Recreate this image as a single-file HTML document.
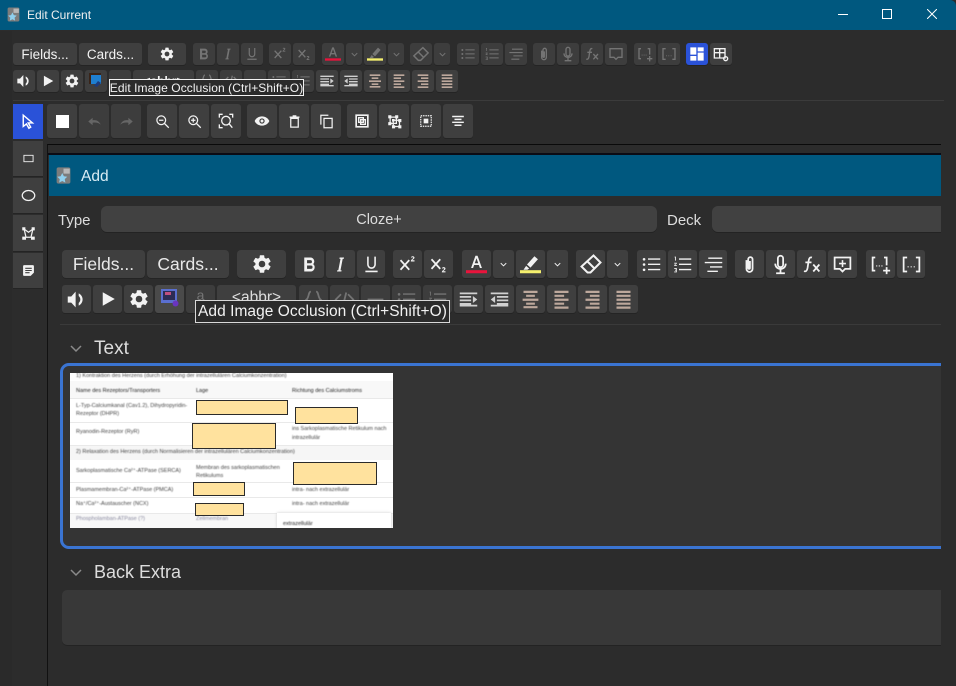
<!DOCTYPE html>
<html><head><meta charset="utf-8"><title>Edit Current</title>
<style>
html,body{margin:0;padding:0;width:956px;height:686px;overflow:hidden;background:#2c2c2c;font-family:"Liberation Sans",sans-serif;color:#eee}
div,span{box-sizing:border-box}
.a{position:absolute}
.row{position:absolute;left:0;width:956px}
.b{position:absolute;top:0;height:100%;background:#3f3f3f;display:flex;align-items:center;justify-content:center;border-radius:3px;box-shadow:0 1px 0 #242424;color:#f2f2f2;white-space:nowrap}
.r1,.r2{height:22px}.r1 svg,.r2 svg{width:16px;height:16px}
.r1{top:43px}.r2{top:70px}
.t{top:104px;height:34px}.t svg{width:15px;height:15px}
.r3,.r4{height:28px}.r3 svg,.r4 svg{width:21px;height:21px}
.r3{top:250px}.r4{top:285px}
.d{color:#747474;background:#3d3d3d}
.w{color:#bda89c}
.g{color:#d0d0d0}
.ch svg{width:11px!important;height:11px!important}
svg{display:block;fill:currentColor}
.s{fill:none;stroke:currentColor;stroke-width:2}
.tt{position:absolute;background:#2b2b2b;border:1px solid #f2f2f2;color:#f2f2f2;white-space:nowrap;display:flex;align-items:center;justify-content:center}
.ov{position:absolute;background:#ffe29e;border:1px solid #2b2b2b}
.p{position:absolute;font-size:5.5px;color:#444;white-space:nowrap;line-height:6px;filter:blur(.5px)}
.l{position:absolute;left:0;width:323px;height:1px;background:#e9e9e9}
</style></head><body>
<svg width="0" height="0" style="position:absolute"><defs>
<symbol id="gear" viewBox="0 0 24 24"><path d="M19.14 12.94c.04-.3.06-.61.06-.94 0-.32-.02-.64-.07-.94l2.03-1.58a.49.49 0 0 0 .12-.61l-1.92-3.32a.49.49 0 0 0-.59-.22l-2.39.96c-.5-.38-1.03-.7-1.62-.94l-.36-2.54a.48.48 0 0 0-.48-.41h-3.84a.48.48 0 0 0-.47.41l-.36 2.54c-.59.24-1.13.57-1.62.94l-2.39-.96a.49.49 0 0 0-.59.22L2.74 8.87a.48.48 0 0 0 .12.61l2.03 1.58c-.05.3-.09.63-.09.94s.02.64.07.94l-2.03 1.58a.49.49 0 0 0-.12.61l1.92 3.32c.12.22.37.29.59.22l2.39-.96c.5.38 1.03.7 1.62.94l.36 2.54c.05.24.24.41.48.41h3.84c.24 0 .44-.17.47-.41l.36-2.54c.59-.24 1.13-.56 1.62-.94l2.39.96c.22.08.47 0 .59-.22l1.92-3.32c.12-.22.07-.47-.12-.61l-2.01-1.58zM12 15.6A3.6 3.6 0 1 1 12 8.4a3.6 3.6 0 0 1 0 7.2z"/></symbol>
<symbol id="bold" viewBox="0 0 24 24"><path d="M6 4h7a4.500 4.500 0 0 1 3.200 7.600A4.800 4.800 0 0 1 14 20H6zm3.200 3v3.600H13a1.800 1.800 0 0 0 0-3.600zm0 6.200V17h4.400a1.900 1.900 0 0 0 0-3.800z"/></symbol>
<symbol id="ital" viewBox="0 0 24 24"><path d="M11 4h5l-.3 1.500h-1.200L12 18.500h1.200L13 20H8l.3-1.500h1.200L12 5.500h-1.200z"/></symbol>
<symbol id="und" viewBox="0 0 24 24"><path d="M7 3h1.800v9a3.200 3.200 0 0 0 6.400 0V3H17v9a5 5 0 0 1-10 0zM5 19h14v1.800H5z"/></symbol>
<symbol id="sup" viewBox="0 0 24 24"><path class="s" d="M4 7l10 11M14 7L4 18"/><path d="M16 3.500c1-1.500 4-1.200 4 .7 0 1.300-1.900 2-2.500 3H20V8.500h-4.200c0-2.300 2.700-3 2.700-4.200 0-.8-1.200-.7-1.700 0z"/></symbol>
<symbol id="sub" viewBox="0 0 24 24"><path class="s" d="M4 6l10 11M14 6L4 17"/><path d="M16 16c1-1.500 4-1.200 4 .7 0 1.300-1.900 2-2.500 3H20V21h-4.200c0-2.300 2.700-3 2.700-4.200 0-.8-1.200-.7-1.700 0z"/></symbol>
<symbol id="A" viewBox="0 0 24 24"><path d="M10.800 2h2.400l5 14h-2.300l-1.200-3.500H9.300L8.100 16H5.800zm-.8 8.500h4L12 4.800z"/><rect x="0" y="18.500" width="24" height="3.500" fill="#e8143c"/></symbol>
<symbol id="pen" viewBox="0 0 24 24"><path d="M16.500 2.500l4 3.500-8.500 9.500-4-3.500zM7 13.500l3.500 3-2 1.500H4z"/><rect x="0" y="18.500" width="24" height="3.500" fill="#f5f06e"/></symbol>
<symbol id="chev" viewBox="0 0 24 24"><path class="s" stroke-width="3" d="M6 9l6 6 6-6"/></symbol>
<symbol id="eras" viewBox="0 0 24 24"><path class="s" stroke-width="1.600" d="M14.500 3.500l7 7-10 10h-3l-6-6zM8.500 9.500l7 7"/></symbol>
<symbol id="ul" viewBox="0 0 24 24"><path d="M8 5h14v1.600H8zM8 11h14v1.600H8zM8 17h14v1.600H8z"/><circle cx="3.500" cy="6" r="1.500"/><circle cx="3.500" cy="12" r="1.500"/><circle cx="3.500" cy="18" r="1.500"/></symbol>
<symbol id="ol" viewBox="0 0 24 24"><path d="M8 5h14v1.600H8zM8 11h14v1.600H8zM8 17h14v1.600H8zM3 3h1.500v4.500h-1V4H3zM2.500 10h3v1l-2 1.500h2v1h-3v-1l2-1.500h-2zM2.500 16h3v5h-3v-1h2v-1h-1v-1h1v-1h-2z"/></symbol>
<symbol id="al" viewBox="0 0 24 24"><path d="M6 4h16v1.600H6zM2 9h20v1.600H2zM8 14h14v1.600H8zM5 19h12v1.600H5z"/></symbol>
<symbol id="clip" viewBox="0 0 24 24"><path class="s" stroke-width="1.500" d="M8.500 7v10a3.500 3.500 0 0 0 7 0V6a2.500 2.500 0 0 0-5 0v10a1 1 0 0 0 2 0V8"/></symbol>
<symbol id="mic" viewBox="0 0 24 24"><path class="s" stroke-width="1.500" d="M12 2a3 3 0 0 1 3 3v7a3 3 0 0 1-6 0V5a3 3 0 0 1 3-3zM6 11c0 8 12 8 12 0M12 17v4M7 22h10"/></symbol>
<symbol id="fx" viewBox="0 0 24 24"><path class="s" stroke-width="1.600" d="M12.500 4C9.500 3 9 6 8.500 9L7.500 16C7 19 5.500 20.500 3.500 19.500M5 9.500h7"/><path class="s" stroke-width="2" d="M14 12l7 8M21 12l-7 8"/></symbol>
<symbol id="cm" viewBox="0 0 24 24"><path class="s" stroke-width="1.700" d="M3 4h18v13h-6l-3 3-3-3H3z"/><path d="M11.100 7h1.800v3h3v1.800h-3v3h-1.800v-3h-3V10h3z"/></symbol>
<symbol id="cm0" viewBox="0 0 24 24"><path class="s" stroke-width="1.700" d="M3 4h18v13h-6l-3 3-3-3H3z"/></symbol>
<symbol id="cl1" viewBox="0 0 24 24"><path class="s" stroke-width="1.700" d="M6 4H3v15h3M16 4h3v9"/><path d="M7 13h1.300v1.300H7zM10 13h1.300v1.300H10zM13 13h1.300v1.300H13zM18 15h2v3h3v2h-3v3h-2v-3h-3v-2h3z"/></symbol>
<symbol id="cl2" viewBox="0 0 24 24"><path class="s" stroke-width="1.700" d="M7 4H3v16h4M17 4h4v16h-4"/><path d="M7.500 14h1.300v1.300H7.500zM11 14h1.300v1.300H11zM14.500 14h1.300v1.300h-1.300z"/></symbol>
<symbol id="spk" viewBox="0 0 24 24"><path d="M2 8.500h4L11 3v18l-5-5.500H2zM14.500 5c6 3 6 11 0 14v-3c2.500-2 2.500-6 0-8z"/></symbol>
<symbol id="play" viewBox="0 0 24 24"><path d="M5 3l16 9-16 9z"/></symbol>
<symbol id="lay" viewBox="0 0 24 24"><path d="M2 2h9v11H2zM13 2h9v6h-9zM13 10h9v12h-9zM2 15h9v7H2z"/></symbol>
<symbol id="tbl" viewBox="0 0 24 24"><path class="s" stroke-width="2" d="M2 4h16v14H2zM2 10h16M10 4v14"/><circle class="s" cx="19" cy="19" r="3" stroke-width="1.500" fill="#404040"/></symbol>
<symbol id="ind" viewBox="0 0 24 24"><path d="M2 4h20v2H2zM2 8h13v2H2zM2 12h13v2H2zM2 16h13v2H2zM2 20h20v-2H2zM17 8l5 4-5 4z"/></symbol>
<symbol id="out" viewBox="0 0 24 24"><path d="M2 4h20v2H2zM9 8h13v2H9zM9 12h13v2H9zM9 16h13v2H9zM2 20h20v-2H2zM7 8l-5 4 5 4z"/></symbol>
<symbol id="ac" viewBox="0 0 24 24"><path d="M4 3h16v2.500H4zM7 7.500h10V10H7zM3 12h18v2.500H3zM7 16.500h10V19H7zM4 20.500h16V23H4z" transform="translate(0 -1)"/></symbol>
<symbol id="aL" viewBox="0 0 24 24"><path d="M4 2h16v2.500H4zM4 6.500h11V9H4zM4 11h16v2.500H4zM4 15.500h11V18H4zM4 20h16v2.500H4z"/></symbol>
<symbol id="aR" viewBox="0 0 24 24"><path d="M4 2h16v2.500H4zM9 6.500h11V9H9zM4 11h16v2.500H4zM9 15.500h11V18H9zM4 20h16v2.500H4z"/></symbol>
<symbol id="aJ" viewBox="0 0 24 24"><path d="M4 2h16v2.500H4zM4 6.500h16V9H4zM4 11h16v2.500H4zM4 15.500h16V18H4zM4 20h16v2.500H4z"/></symbol>
<symbol id="cur" viewBox="0 0 24 24"><path class="s" d="M6 3l13 11h-6l3.500 6-2.500 1.500-3.500-6L6 19z" fill="#2a52d8"/></symbol>
<symbol id="rect" viewBox="0 0 24 24"><path class="s" stroke-width="2.500" d="M2 5h20v14H2z"/></symbol>
<symbol id="ell" viewBox="0 0 24 24"><ellipse class="s" cx="12" cy="12" rx="10" ry="8"/></symbol>
<symbol id="poly" viewBox="0 0 24 24"><path class="s" d="M5 5l3 13h8l3-13-7 5z"/><path d="M2 2h5v5H2zM17 2h5v5h-5zM2 17h6v5H2zM16 17h6v5h-6z"/></symbol>
<symbol id="note" viewBox="0 0 24 24"><path d="M4 2h16a2 2 0 0 1 2 2v12l-6 6H4a2 2 0 0 1-2-2V4a2 2 0 0 1 2-2zm2 5v2h12V7zm0 4v2h12v-2zm0 4v2h8v-2z" fill-rule="evenodd"/></symbol>
<symbol id="undo" viewBox="0 0 24 24"><path d="M9 6v4c6-1 10 1 13 7-4-3-8-4-13-3v4L2 12z"/></symbol>
<symbol id="redo" viewBox="0 0 24 24"><path d="M15 6v4c-6-1-10 1-13 7 4-3 8-4 13-3v4l7-6z"/></symbol>
<symbol id="zo" viewBox="0 0 24 24"><circle class="s" cx="10" cy="10" r="7"/><path class="s" d="M15 15l7 7M6.500 10h7"/></symbol>
<symbol id="zi" viewBox="0 0 24 24"><circle class="s" cx="10" cy="10" r="7"/><path class="s" d="M15 15l7 7M6.500 10h7M10 6.500v7"/></symbol>
<symbol id="zf" viewBox="0 0 24 24"><circle class="s" cx="12" cy="11.500" r="6.500"/><path class="s" d="M16.500 16l5 6M2 7V2h5M17 2h5v5M2 17v5h5"/></symbol>
<symbol id="eye" viewBox="0 0 24 24"><path d="M12 5c5 0 9.500 3 11 7-1.500 4-6 7-11 7S2.500 16 1 12c1.500-4 6-7 11-7zm0 3a4 4 0 1 0 0 8 4 4 0 0 0 0-8zm0 1.800a2.200 2.200 0 1 1 0 4.400 2.200 2.200 0 0 1 0-4.400z" fill-rule="evenodd"/></symbol>
<symbol id="trash" viewBox="0 0 24 24"><path class="s" d="M6 7h12v14H6zM4 5h16"/><path d="M9 2h6v2H9z"/></symbol>
<symbol id="copy" viewBox="0 0 24 24"><path class="s" d="M8 7h13v15H8zM3 17V2h12"/></symbol>
<symbol id="grp" viewBox="0 0 24 24"><path class="s" d="M7 7h7v7H7zM10 10h7v7h-7z"/><path d="M2 2h20v20H2zm2.500 2.500v15h15v-15z" fill-rule="evenodd"/></symbol>
<symbol id="ung" viewBox="0 0 24 24"><path class="s" d="M5 5h10v10H5zM10 10h10v10H10z"/><path d="M2 2h5v5H2zM13 2h5v5h-5zM2 13h5v5H2zM8 8h4v4H8zM18 8h5v5h-5zM8 18h5v5H8zM18 18h5v5h-5z"/></symbol>
<symbol id="sel" viewBox="0 0 24 24"><path class="s" stroke-dasharray="2.500 1.500" d="M3 3h18v18H3z"/><path d="M8 8h8v8H8z"/></symbol>
<symbol id="alc" viewBox="0 0 24 24"><path d="M2 3h20v2.500H2zM6 8h12v2.500H6zM2 13h20v2.500H2zM6 18h12v2.500H6z"/></symbol>
<symbol id="dash" viewBox="0 0 24 24"><path d="M3 11h18v2.500H3z"/></symbol>
<symbol id="code" viewBox="0 0 24 24"><path class="s" d="M8 6l-6 6 6 6M16 6l6 6-6 6M14 4l-4 16"/></symbol>
<symbol id="brace" viewBox="0 0 24 24"><path class="s" d="M9 3C6 3 7 10 4 12c3 2 2 9 5 9M15 3c3 0 2 7 5 9-3 2-2 9-5 9"/></symbol>
<symbol id="anki" viewBox="0 0 12 14"><rect x=".5" y=".5" width="11" height="13" rx="1.500" fill="#7c7c7c"/><rect x="6" y="1.500" width="5" height="4" fill="#b8b8b8"/><path d="M5 5l1.300 2.600 2.700.4-2 1.900.5 2.800L5 11.400l-2.500 1.300.5-2.800-2-1.900 2.700-.4z" fill="#8fd0ee"/></symbol>
</defs></svg>

<!-- Title bar -->
<div class="a" style="left:0;top:0;width:956px;height:30px;background:#00587f;border-radius:0 6px 0 0"></div>
<svg class="a" style="left:7px;top:7px;width:13px;height:15px"><use href="#anki"/></svg>
<div class="a" style="left:27px;top:8px;font-size:12px;line-height:15px;color:#f0f0f0">Edit Current</div>
<div class="a" style="left:838px;top:14px;width:10px;height:1px;background:#fff"></div>
<div class="a" style="left:882px;top:9px;width:10px;height:10px;border:1px solid #fff"></div>
<svg class="a" style="left:927px;top:9px;width:10px;height:10px"><path d="M0 0L10 10M10 0L0 10" stroke="#fff" fill="none"/></svg>

<!-- Top row 1 -->
<div class="row r1">
<div class="b" style="left:13px;width:64px;font-size:13.500px">Fields...</div>
<div class="b" style="left:79px;width:63px;font-size:13.500px">Cards...</div>
<div class="b" style="left:148px;width:38px"><svg><use href="#gear"/></svg></div>
<div class="b d" style="left:193px;width:22px"><svg><use href="#bold"/></svg></div>
<div class="b d" style="left:217px;width:22px"><svg><use href="#ital"/></svg></div>
<div class="b d" style="left:241px;width:22px"><svg><use href="#und"/></svg></div>
<div class="b d" style="left:269px;width:22px"><svg><use href="#sup"/></svg></div>
<div class="b d" style="left:293px;width:22px"><svg><use href="#sub"/></svg></div>
<div class="b d" style="left:322px;width:22px"><svg><use href="#A"/></svg></div>
<div class="b d ch" style="left:346px;width:16px"><svg><use href="#chev"/></svg></div>
<div class="b d" style="left:364px;width:22px"><svg><use href="#pen"/></svg></div>
<div class="b d ch" style="left:388px;width:16px"><svg><use href="#chev"/></svg></div>
<div class="b d" style="left:410px;width:22px"><svg style="width:18px;height:18px"><use href="#eras"/></svg></div>
<div class="b d ch" style="left:434px;width:16px"><svg><use href="#chev"/></svg></div>
<div class="b d" style="left:457px;width:22px"><svg><use href="#ul"/></svg></div>
<div class="b d" style="left:481px;width:22px"><svg><use href="#ol"/></svg></div>
<div class="b d" style="left:505px;width:22px"><svg><use href="#al"/></svg></div>
<div class="b d" style="left:533px;width:22px"><svg><use href="#clip"/></svg></div>
<div class="b d" style="left:557px;width:22px"><svg><use href="#mic"/></svg></div>
<div class="b d" style="left:581px;width:22px"><svg><use href="#fx"/></svg></div>
<div class="b d" style="left:605px;width:22px"><svg><use href="#cm0"/></svg></div>
<div class="b d" style="left:634px;width:22px"><svg><use href="#cl1"/></svg></div>
<div class="b d" style="left:658px;width:22px"><svg><use href="#cl2"/></svg></div>
<div class="b" style="left:686px;width:22px;background:#2a52d8;color:#fff"><svg><use href="#lay"/></svg></div>
<div class="b" style="left:710px;width:22px"><svg><use href="#tbl"/></svg></div>
</div>
<!-- Top row 2 -->
<div class="row r2">
<div class="b" style="left:13px;width:22px"><svg><use href="#spk"/></svg></div>
<div class="b" style="left:37px;width:22px"><svg style="width:14px;height:14px"><use href="#play"/></svg></div>
<div class="b" style="left:61px;width:22px"><svg><use href="#gear"/></svg></div>
<div class="b" style="left:85px;width:22px"><svg style="width:14px;height:14px;margin:-3px 0 0 -1px" viewBox="0 0 14 14"><rect width="12" height="11" fill="#3a2418"/><rect x="2" y="2" width="10" height="9" fill="#1f7fd0"/><path d="M5 13l4-5 3 2-4 4z" fill="#1d3a7a"/></svg></div>
<div class="b d" style="left:109px;width:22px"></div>
<div class="b" style="left:133px;width:61px;font-size:12px;align-items:flex-start;padding-top:4px;font-weight:bold">&lt;abbr&gt;</div>
<div class="b d" style="left:196px;width:22px"><svg><use href="#brace"/></svg></div>
<div class="b d" style="left:220px;width:22px"><svg><use href="#code"/></svg></div>
<div class="b d" style="left:244px;width:22px"><svg><use href="#dash"/></svg></div>
<div class="b d" style="left:268px;width:22px"><svg><use href="#ul"/></svg></div>
<div class="b d" style="left:292px;width:22px"><svg><use href="#ol"/></svg></div>
<div class="b g" style="left:316px;width:22px"><svg><use href="#ind"/></svg></div>
<div class="b g" style="left:340px;width:22px"><svg><use href="#out"/></svg></div>
<div class="b w" style="left:364px;width:22px"><svg><use href="#ac"/></svg></div>
<div class="b w" style="left:388px;width:22px"><svg><use href="#aL"/></svg></div>
<div class="b w" style="left:412px;width:22px"><svg><use href="#aR"/></svg></div>
<div class="b w" style="left:436px;width:22px"><svg><use href="#aJ"/></svg></div>
</div>
<div class="tt" style="left:109px;top:79px;width:195px;height:17px;font-size:12px;letter-spacing:.08px">Edit Image Occlusion (Ctrl+Shift+O)</div>
<div class="a" style="left:13px;top:100px;width:931px;height:1px;background:#3b3b3b"></div>

<!-- Tools -->
<div class="a" style="left:13px;top:104px;width:30px;height:35px;background:#2a52d8"><svg class="a" style="left:6px;top:9px;width:17px;height:17px;color:#fff"><use href="#cur"/></svg></div>
<div class="row t">
<div class="b" style="left:47px;width:30px"><svg viewBox="0 0 24 24" style="width:13px;height:13px"><path d="M0 0h24v24H0z" fill="#fff"/></svg></div>
<div class="b d" style="left:79px;width:30px;color:#666"><svg><use href="#undo"/></svg></div>
<div class="b d" style="left:111px;width:30px;color:#666"><svg><use href="#redo"/></svg></div>
<div class="b" style="left:147px;width:30px"><svg><use href="#zo"/></svg></div>
<div class="b" style="left:179px;width:30px"><svg><use href="#zi"/></svg></div>
<div class="b" style="left:211px;width:30px"><svg style="width:16px;height:16px"><use href="#zf"/></svg></div>
<div class="b" style="left:247px;width:30px"><svg style="width:16px;height:16px"><use href="#eye"/></svg></div>
<div class="b" style="left:279px;width:30px"><svg><use href="#trash"/></svg></div>
<div class="b" style="left:311px;width:30px"><svg><use href="#copy"/></svg></div>
<div class="b" style="left:347px;width:30px"><svg style="width:16px;height:16px"><use href="#grp"/></svg></div>
<div class="b" style="left:379px;width:30px"><svg style="width:15px;height:15px"><use href="#ung"/></svg></div>
<div class="b" style="left:411px;width:30px"><svg style="width:14px;height:14px"><use href="#sel"/></svg></div>
<div class="b" style="left:443px;width:30px"><svg style="width:14px;height:14px"><use href="#alc"/></svg></div>
</div>
<!-- Side rail -->
<div class="a" style="left:0;top:31px;width:12px;height:655px;background:#2a2a2a"></div>
<div class="b" style="left:13px;top:141px;width:30px;height:35px;border-radius:0"><svg style="width:11px;height:11px"><use href="#rect"/></svg></div>
<div class="b" style="left:13px;top:178px;width:30px;height:35px;border-radius:0"><svg style="width:15px;height:15px"><use href="#ell"/></svg></div>
<div class="b" style="left:13px;top:215px;width:30px;height:36px;border-radius:0"><svg style="width:15px;height:15px"><use href="#poly"/></svg></div>
<div class="b" style="left:13px;top:253px;width:30px;height:35px;border-radius:0"><svg style="width:13px;height:13px"><use href="#note"/></svg></div>

<!-- Canvas frame -->
<div class="a" style="left:47px;top:144px;width:895px;height:542px;border-left:1px solid #111;border-top:1px solid #0a0a0a;background:#2c2c2c"></div>
<div class="a" style="left:48px;top:153px;width:893px;height:2px;background:#0b0b14"></div>
<div class="a" style="left:49px;top:155px;width:892px;height:41px;background:#00587f"></div>
<svg class="a" style="left:56px;top:166px;width:15px;height:19px"><use href="#anki"/></svg>
<div class="a" style="left:81px;top:168px;font-size:15.500px;line-height:18px;color:#d8ecf4">Add</div>

<div class="a" style="left:58px;top:212px;font-size:15px;line-height:18px;color:#ddd">Type</div>
<div class="a" style="left:101px;top:206px;width:556px;height:26px;background:#414141;border-radius:6px;text-align:center;font-size:14.500px;line-height:29px;color:#ddd;box-shadow:0 1px 0 #232323">Cloze+</div>
<div class="a" style="left:667px;top:212px;font-size:15px;line-height:18px;color:#ddd">Deck</div>
<div class="a" style="left:712px;top:206px;width:229px;height:26px;background:#414141;border-radius:6px 0 0 6px;box-shadow:0 1px 0 #232323"></div>

<!-- Inner row 1 -->
<div class="row r3">
<div class="b" style="left:62px;width:83px;font-size:17.500px;color:#e8e8e8;border-radius:4px">Fields...</div>
<div class="b" style="left:147px;width:82px;font-size:17.500px;color:#e8e8e8;border-radius:4px">Cards...</div>
<div class="b" style="left:237px;width:49px;border-radius:4px"><svg style="width:22px;height:22px"><use href="#gear"/></svg></div>
<div class="b" style="left:295px;width:29px"><svg><use href="#bold"/></svg></div>
<div class="b" style="left:326px;width:29px"><svg><use href="#ital"/></svg></div>
<div class="b" style="left:357px;width:28px"><svg><use href="#und"/></svg></div>
<div class="b" style="left:393px;width:29px"><svg><use href="#sup"/></svg></div>
<div class="b" style="left:424px;width:29px"><svg><use href="#sub"/></svg></div>
<div class="b" style="left:462px;width:29px"><svg><use href="#A"/></svg></div>
<div class="b ch" style="left:493px;width:21px"><svg><use href="#chev"/></svg></div>
<div class="b" style="left:516px;width:29px"><svg><use href="#pen"/></svg></div>
<div class="b ch" style="left:547px;width:21px"><svg><use href="#chev"/></svg></div>
<div class="b" style="left:576px;width:29px"><svg style="width:24px;height:24px"><use href="#eras"/></svg></div>
<div class="b ch" style="left:607px;width:21px"><svg><use href="#chev"/></svg></div>
<div class="b" style="left:637px;width:29px"><svg><use href="#ul"/></svg></div>
<div class="b" style="left:668px;width:29px"><svg><use href="#ol"/></svg></div>
<div class="b" style="left:699px;width:28px"><svg><use href="#al"/></svg></div>
<div class="b" style="left:735px;width:29px"><svg><use href="#clip"/></svg></div>
<div class="b" style="left:766px;width:29px"><svg><use href="#mic"/></svg></div>
<div class="b" style="left:797px;width:29px"><svg><use href="#fx"/></svg></div>
<div class="b" style="left:828px;width:29px"><svg><use href="#cm"/></svg></div>
<div class="b" style="left:866px;width:29px"><svg><use href="#cl1"/></svg></div>
<div class="b" style="left:897px;width:28px"><svg><use href="#cl2"/></svg></div>
</div>
<!-- Inner row 2 -->
<div class="row r4">
<div class="b" style="left:62px;width:29px"><svg><use href="#spk"/></svg></div>
<div class="b" style="left:93px;width:29px"><svg style="width:18px;height:18px"><use href="#play"/></svg></div>
<div class="b" style="left:124px;width:29px"><svg style="width:22px;height:22px"><use href="#gear"/></svg></div>
<div class="b" style="left:155px;width:29px;background:#4a4a4a"><svg style="width:20px;height:20px;margin-top:-3px" viewBox="0 0 20 20"><rect x="1" y="1" width="16" height="14" fill="#5a6fd0"/><rect x="3" y="3" width="12" height="9" fill="#2c2c55"/><rect x="5" y="4" width="6" height="3" fill="#c05080"/><circle cx="15.500" cy="15.500" r="3" fill="#6a35c0"/></svg></div>
<div class="b d" style="left:186px;width:29px;align-items:flex-start;padding-top:2px;font-size:14px">a</div>
<div class="b" style="left:217px;width:79px;font-size:15.500px;align-items:flex-start;padding-top:4px;color:#ddd">&lt;abbr&gt;</div>
<div class="b d" style="left:299px;width:29px"><svg><use href="#brace"/></svg></div>
<div class="b d" style="left:330px;width:29px"><svg><use href="#code"/></svg></div>
<div class="b d" style="left:361px;width:29px"><svg><use href="#dash"/></svg></div>
<div class="b d" style="left:392px;width:29px"><svg><use href="#ul"/></svg></div>
<div class="b d" style="left:423px;width:29px"><svg><use href="#ol"/></svg></div>
<div class="b g" style="left:454px;width:29px"><svg><use href="#ind"/></svg></div>
<div class="b g" style="left:485px;width:29px"><svg><use href="#out"/></svg></div>
<div class="b w" style="left:516px;width:29px"><svg><use href="#ac"/></svg></div>
<div class="b w" style="left:547px;width:29px"><svg><use href="#aL"/></svg></div>
<div class="b w" style="left:578px;width:29px"><svg><use href="#aR"/></svg></div>
<div class="b w" style="left:609px;width:29px"><svg><use href="#aJ"/></svg></div>
</div>
<div class="tt" style="left:195px;top:300px;width:255px;height:23px;font-size:15.500px;letter-spacing:.05px;border-color:#d8d8d8">Add Image Occlusion (Ctrl+Shift+O)</div>
<div class="a" style="left:60px;top:324px;width:881px;height:1px;background:#3a3a3a"></div>

<!-- Text field -->
<svg class="a" style="left:70px;top:344px;width:12px;height:10px;color:#8a8a8a" viewBox="0 0 12 10"><path d="M1 2l5 5 5-5" fill="none" stroke="currentColor" stroke-width="1.500"/></svg>
<div class="a" style="left:94px;top:338px;font-size:19px;line-height:22px;color:#ddd">Text</div>
<div class="a" style="left:60px;top:363px;width:890px;height:186px;border:3px solid #3a74d2;border-radius:9px;background:#343434"></div>
<div class="a" style="left:70px;top:373px;width:323px;height:155px;background:#fff;overflow:hidden">
<div class="a" style="left:0;top:8px;width:323px;height:17px;background:#f8f8f8"></div>
<div class="a" style="left:0;top:72px;width:323px;height:15px;background:#f6f6f6"></div>
<div class="a" style="left:0;top:140px;width:323px;height:15px;background:#f8f8f8"></div>
<div class="l" style="top:25px"></div><div class="l" style="top:49px"></div><div class="l" style="top:72px"></div><div class="l" style="top:109px"></div><div class="l" style="top:124px"></div><div class="l" style="top:140px"></div>
<div class="p" style="left:6px;top:0">1) Kontraktion des Herzens (durch Erhöhung der intrazellulären Calciumkonzentration)</div>
<div class="p" style="left:6px;top:15px;color:#222">Name des Rezeptors/Transporters</div>
<div class="p" style="left:126px;top:15px;color:#222">Lage</div>
<div class="p" style="left:222px;top:15px;color:#222">Richtung des Calciumstroms</div>
<div class="p" style="left:6px;top:30px;line-height:7.500px">L-Typ-Calciumkanal (Cav1.2), Dihydropyridin-<br>Rezeptor (DHPR)</div>
<div class="p" style="left:6px;top:56px">Ryanodin-Rezeptor (RyR)</div>
<div class="p" style="left:222px;top:52px;line-height:9px">ins Sarkoplasmatische Retikulum nach<br>intrazellulär</div>
<div class="p" style="left:6px;top:76px">2) Relaxation des Herzens (durch Normalisieren der intrazellulären Calciumkonzentration)</div>
<div class="p" style="left:6px;top:95px">Sarkoplasmatische Ca²⁺-ATPase (SERCA)</div>
<div class="p" style="left:126px;top:91px;line-height:8px">Membran des sarkoplasmatischen<br>Retikulums</div>
<div class="p" style="left:6px;top:114px">Plasmamembran-Ca²⁺-ATPase (PMCA)</div>
<div class="p" style="left:222px;top:114px">intra- nach extrazellulär</div>
<div class="p" style="left:6px;top:128px">Na⁺/Ca²⁺-Austauscher (NCX)</div>
<div class="p" style="left:222px;top:128px">intra- nach extrazellulär</div>
<div class="p" style="left:6px;top:143px;color:#8a8aa0">Phospholamban-ATPase (?)</div>
<div class="p" style="left:126px;top:143px;color:#8a8aa0">Zellmembran</div>
<div class="a" style="left:207px;top:140px;width:114px;height:15px;background:#fff;box-shadow:0 0 3px #ccc"></div>
<div class="p" style="left:213px;top:148px;color:#222">extrazellulär</div>
</div>
<div class="ov" style="left:196px;top:400px;width:92px;height:15px"></div>
<div class="ov" style="left:295px;top:407px;width:63px;height:17px"></div>
<div class="ov" style="left:192px;top:423px;width:84px;height:26px"></div>
<div class="ov" style="left:293px;top:462px;width:84px;height:23px"></div>
<div class="ov" style="left:193px;top:482px;width:52px;height:14px"></div>
<div class="ov" style="left:195px;top:503px;width:49px;height:13px"></div>

<!-- Back Extra -->
<svg class="a" style="left:70px;top:568px;width:12px;height:10px;color:#8a8a8a" viewBox="0 0 12 10"><path d="M1 2l5 5 5-5" fill="none" stroke="currentColor" stroke-width="1.500"/></svg>
<div class="a" style="left:94px;top:561px;font-size:18px;line-height:22px;color:#ddd">Back Extra</div>
<div class="a" style="left:62px;top:590px;width:880px;height:55px;background:#383838;border-radius:5px 0 0 5px;box-shadow:0 1px 0 #232323"></div>
<!-- Clip the web view at its right edge -->
<div class="a" style="left:941px;top:144px;width:15px;height:542px;background:#2c2c2c"></div>
</body></html>
